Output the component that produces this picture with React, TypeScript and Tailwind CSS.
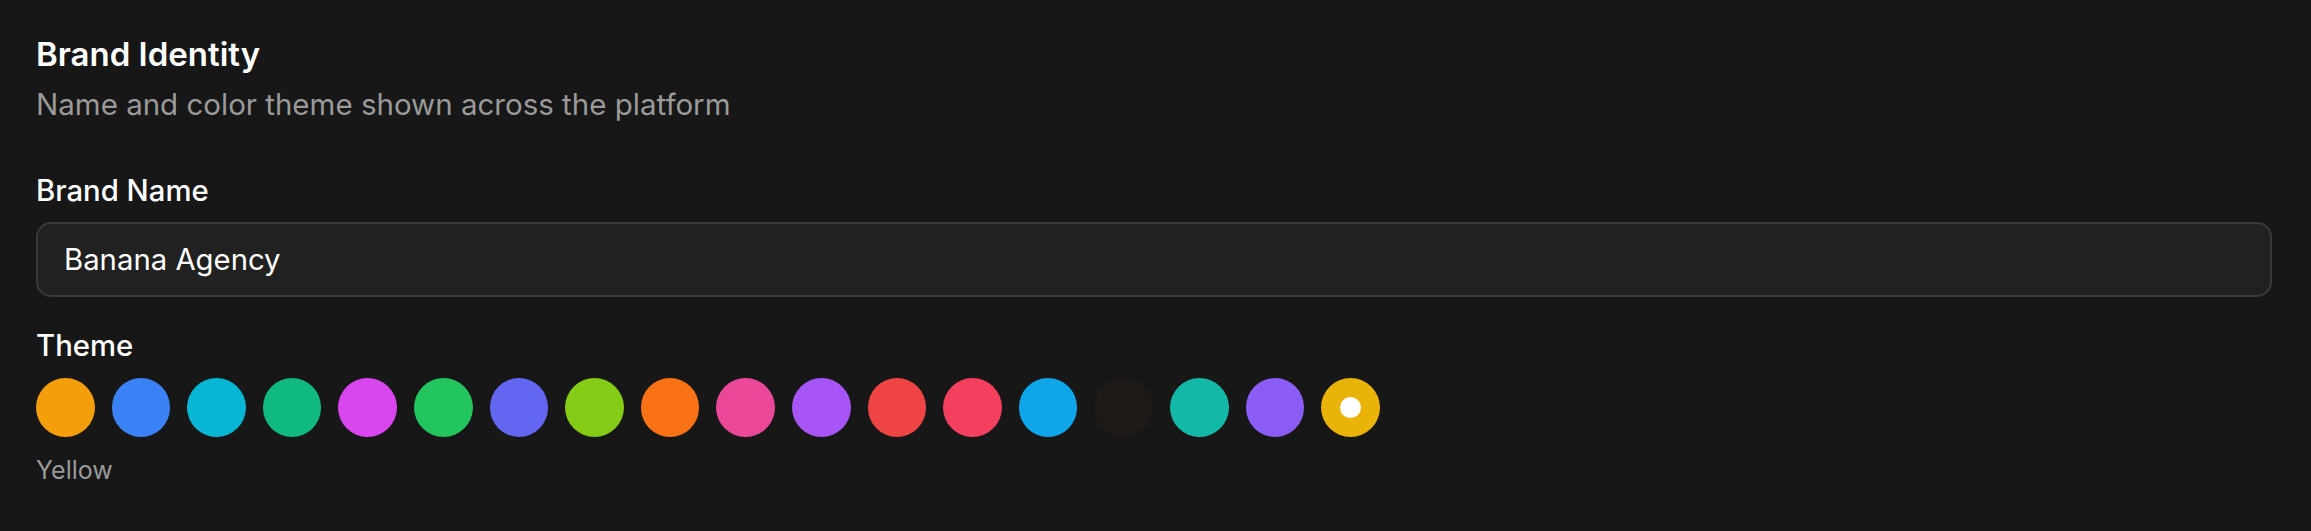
import React from 'react';

interface Swatch {
  name: string;
  bg: string;
}

const swatches: Swatch[] = [
  { name: 'Amber', bg: 'bg-[#f59e0b]' },
  { name: 'Blue', bg: 'bg-[#3b82f6]' },
  { name: 'Cyan', bg: 'bg-[#06b6d4]' },
  { name: 'Emerald', bg: 'bg-[#10b981]' },
  { name: 'Fuchsia', bg: 'bg-[#d946ef]' },
  { name: 'Green', bg: 'bg-[#22c55e]' },
  { name: 'Indigo', bg: 'bg-[#6366f1]' },
  { name: 'Lime', bg: 'bg-[#84cc16]' },
  { name: 'Orange', bg: 'bg-[#f97316]' },
  { name: 'Pink', bg: 'bg-[#ec4899]' },
  { name: 'Purple', bg: 'bg-[#a855f7]' },
  { name: 'Red', bg: 'bg-[#ef4444]' },
  { name: 'Rose', bg: 'bg-[#f43f5e]' },
  { name: 'Sky', bg: 'bg-[#0ea5e9]' },
  { name: 'Stone', bg: 'bg-[#1c1917]' },
  { name: 'Teal', bg: 'bg-[#14b8a6]' },
  { name: 'Violet', bg: 'bg-[#8b5cf6]' },
  { name: 'Yellow', bg: 'bg-[#eab308]' },
];

const App: React.FC = () => {
  const selected = 'Yellow';

  return (
    <div className="min-h-[531px] w-full bg-[#171717] pl-[36px] pr-[39px] pt-[28.5px] font-['Inter',sans-serif] text-white">
      <h2 className="text-[33px] font-semibold leading-[51px]">Brand Identity</h2>
      <p className="mt-[2px] text-[29.5px] leading-[44px] text-[#9a9a9a]">
        Name and color theme shown across the platform
      </p>

      <div className="mt-[43.6px]">
        <label className="block text-[29.3px] font-medium leading-[44px]">Brand Name</label>
        <input
          type="text"
          defaultValue="Banana Agency"
          className="mt-[9.3px] h-[75px] w-full rounded-[15px] border-2 border-[#3a3a3a] bg-[#212121] px-[26px] text-[29.3px] text-white outline-none"
        />
      </div>

      <div className="mt-[26.7px]">
        <div className="text-[29.3px] font-medium leading-[44px]">Theme</div>
        <div className="mt-[9.9px] flex gap-[17px]">
          {swatches.map((s) => (
            <button
              key={s.name}
              aria-label={s.name}
              className={`flex h-[58.6px] w-[58.6px] items-center justify-center rounded-full ${s.bg}`}
            >
              {s.name === selected && <span className="h-[21px] w-[21px] rounded-full bg-white" />}
            </button>
          ))}
        </div>
        <div className="mt-[15.3px] text-[25px] leading-[36px] text-[#9a9a9a]">{selected}</div>
      </div>
    </div>
  );
};

export default App;
